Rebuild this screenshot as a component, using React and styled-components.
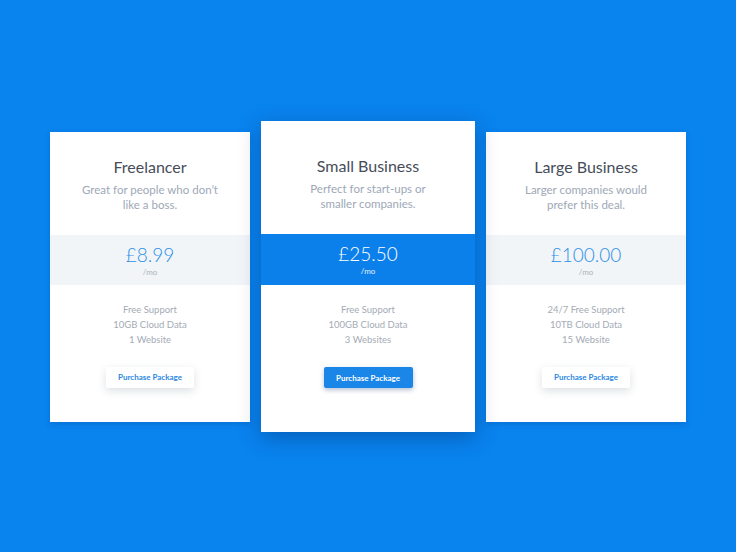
import React from "react";
import styled, { createGlobalStyle, css } from "styled-components";

const GlobalStyle = createGlobalStyle`
  html, body {
    margin: 0;
    padding: 0;
    background: #0983ee;
  }
  body {
    font-family: "Source Sans Pro", Lato, "Open Sans", sans-serif;
    -webkit-font-smoothing: antialiased;
  }
`;

const Page = styled.main`
  width: 736px;
  height: 552px;
  display: flex;
  align-items: center;
  justify-content: center;
  gap: 11px;
  box-sizing: border-box;
  padding-top: 1px;
`;

const Card = styled.section`
  box-sizing: border-box;
  background: #ffffff;
  display: flex;
  flex-direction: column;
  align-items: stretch;
  text-align: center;
  width: 200px;
  height: 290px;
  padding-top: 25px;
  position: relative;
  box-shadow: 0 2px 6px rgba(0, 40, 110, 0.18);
  ${(p) =>
    p.$featured &&
    css`
      width: 214px;
      height: 311px;
      padding-top: 35px;
      z-index: 1;
      box-shadow: 0 6px 20px rgba(0, 30, 90, 0.35);
    `}
`;

const Title = styled.h2`
  margin: 0;
  font-size: 16px;
  line-height: 20px;
  font-weight: 400;
  color: #464d59;
`;

const Blurb = styled.p`
  margin: 5px 0 0;
  font-size: 11.5px;
  line-height: 15px;
  color: #9ea8b6;
`;

const PriceBand = styled.div`
  margin-top: 23px;
  height: 50px;
  box-sizing: border-box;
  padding-top: 8px;
  display: flex;
  flex-direction: column;
  align-items: center;
  background: ${(p) => (p.$featured ? "#0b80ea" : "#f2f5f8")};
  ${(p) => p.$featured && css`height: 51px;`}
`;

const Price = styled.div`
  font-size: 19px;
  line-height: 24px;
  font-weight: 300;
  color: ${(p) => (p.$featured ? "#ffffff" : "#2c8fe8")};
`;

const Per = styled.div`
  font-size: 8px;
  line-height: 10px;
  color: ${(p) => (p.$featured ? "#e6f1fd" : "#aab2bc")};
`;

const Features = styled.ul`
  list-style: none;
  margin: 17px 0 0;
  padding: 0;
  font-size: 9.5px;
  line-height: 15px;
  color: #a4abb5;
`;

const Feature = styled.li``;

const ButtonRow = styled.div`
  margin-top: 20px;
  display: flex;
  justify-content: center;
`;

const Button = styled.button`
  box-sizing: border-box;
  width: 88px;
  height: 21px;
  border: none;
  border-radius: 2px;
  font-family: inherit;
  font-size: 8px;
  font-weight: 700;
  letter-spacing: 0;
  cursor: pointer;
  background: #ffffff;
  color: #2b88e2;
  box-shadow: 0 3px 8px rgba(40, 60, 90, 0.16);
  ${(p) =>
    p.$featured &&
    css`
      width: 89px;
      background: #1a86e8;
      color: #ffffff;
      box-shadow: 0 2px 5px rgba(10, 50, 110, 0.3);
    `}
`;

const plans = [
  {
    name: "Freelancer",
    blurb: ["Great for people who don’t", "like a boss."],
    price: "£8.99",
    features: ["Free Support", "10GB Cloud Data", "1 Website"],
  },
  {
    name: "Small Business",
    blurb: ["Perfect for start-ups or", "smaller companies."],
    price: "£25.50",
    features: ["Free Support", "100GB Cloud Data", "3 Websites"],
    featured: true,
  },
  {
    name: "Large Business",
    blurb: ["Larger companies would", "prefer this deal."],
    price: "£100.00",
    features: ["24/7 Free Support", "10TB Cloud Data", "15 Website"],
  },
];

export default function App() {
  return (
    <>
      <GlobalStyle />
      <Page>
        {plans.map((plan) => (
          <Card key={plan.name} $featured={plan.featured}>
            <Title>{plan.name}</Title>
            <Blurb>
              {plan.blurb[0]}
              <br />
              {plan.blurb[1]}
            </Blurb>
            <PriceBand $featured={plan.featured}>
              <Price $featured={plan.featured}>{plan.price}</Price>
              <Per $featured={plan.featured}>/mo</Per>
            </PriceBand>
            <Features>
              {plan.features.map((f) => (
                <Feature key={f}>{f}</Feature>
              ))}
            </Features>
            <ButtonRow>
              <Button $featured={plan.featured}>Purchase Package</Button>
            </ButtonRow>
          </Card>
        ))}
      </Page>
    </>
  );
}
